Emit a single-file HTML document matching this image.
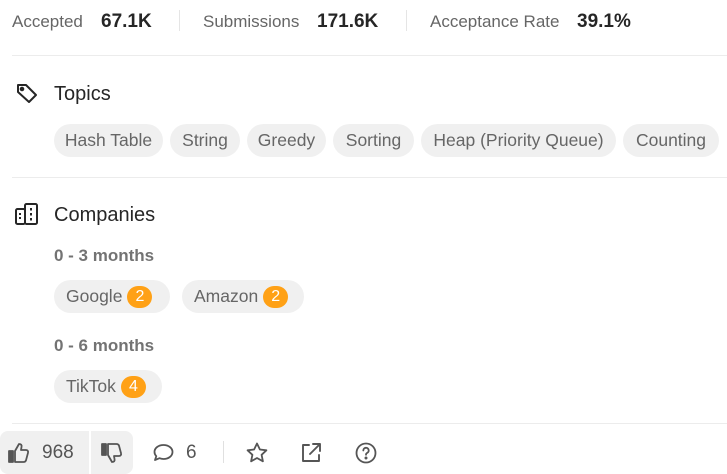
<!DOCTYPE html>
<html><head><meta charset="utf-8"><style>
*{margin:0;padding:0;box-sizing:border-box}
body{width:727px;height:474px;background:#fff;font-family:"Liberation Sans",sans-serif;position:relative;overflow:hidden;color:#262626}
.a{position:absolute;white-space:nowrap}
.lbl{font-size:17px;color:#666}
.val{font-size:19px;font-weight:bold;color:#262626}
.vd{position:absolute;width:1px;background:#e5e5e5}
.hl{position:absolute;left:12px;right:0;height:1px;background:#ececec}
.chip{position:absolute;height:33px;border-radius:17px;background:#f0f0f0;color:#666;font-size:17.5px;line-height:33px;text-align:center;white-space:nowrap}
.chip.l{text-align:left;padding-left:12px}
.badge{display:inline-block;background:#ffa116;color:#fff;border-radius:11px;width:25px;height:22px;line-height:22px;font-size:16px;text-align:center;vertical-align:1px;margin-left:5px}
.sub{font-size:17px;color:#737373;font-weight:bold}
svg{position:absolute}
</style></head><body>
<div class="a lbl" style="left:12px;top:12px">Accepted</div>
<div class="a val" style="left:101px;top:11px">67.1K</div>
<div class="vd" style="left:179px;top:10px;height:21px"></div>
<div class="a lbl" style="left:203px;top:12px">Submissions</div>
<div class="a val" style="left:317px;top:11px">171.6K</div>
<div class="vd" style="left:406px;top:10px;height:21px"></div>
<div class="a lbl" style="left:430px;top:12px">Acceptance Rate</div>
<div class="a val" style="left:577px;top:11px">39.1%</div>
<div class="hl" style="top:55px"></div>

<svg style="left:15px;top:82px" width="24" height="22" viewBox="0 0 24 22" fill="none" stroke="#262626" stroke-width="2" stroke-linejoin="round"><path d="M3 3h8l10 10-7 7L3 10z"/><circle cx="7" cy="7" r="1.3" fill="#262626"/></svg>
<div class="a" style="left:54px;top:83px;font-size:20px">Topics</div>
<div class="chip" style="left:54px;top:124px;width:109px">Hash Table</div>
<div class="chip" style="left:170px;top:124px;width:70px">String</div>
<div class="chip" style="left:247px;top:124px;width:79px">Greedy</div>
<div class="chip" style="left:333px;top:124px;width:81px">Sorting</div>
<div class="chip" style="left:421px;top:124px;width:195px">Heap (Priority Queue)</div>
<div class="chip" style="left:623px;top:124px;width:96px">Counting</div>
<div class="hl" style="top:177px"></div>

<svg style="left:15px;top:202px" width="24" height="24" viewBox="0 0 24 24" fill="none" stroke="#262626" stroke-width="2"><rect x="1" y="7" width="9" height="15" rx="1.5"/><rect x="10" y="2" width="12" height="20" rx="1.5"/><g fill="#262626" stroke="none"><rect x="4" y="11" width="2" height="2"/><rect x="4" y="15" width="2" height="2"/><rect x="15" y="6" width="2" height="2.5"/><rect x="15" y="11" width="2" height="2.5"/><rect x="15" y="16" width="2" height="2.5"/></g></svg>
<div class="a" style="left:54px;top:204px;font-size:20px">Companies</div>
<div class="a sub" style="left:54px;top:246px">0 - 3 months</div>
<div class="chip l" style="left:54px;top:280px;width:116px">Google<span class="badge">2</span></div>
<div class="chip l" style="left:182px;top:280px;width:122px">Amazon<span class="badge">2</span></div>
<div class="a sub" style="left:54px;top:336px">0 - 6 months</div>
<div class="chip l" style="left:54px;top:370px;width:108px">TikTok<span class="badge">4</span></div>
<div class="hl" style="top:423px"></div>

<div class="a" style="left:0;top:431px;width:89px;height:43px;background:#f0f0f0;border-radius:8px 0 0 8px"></div>
<div class="a" style="left:91px;top:431px;width:42px;height:43px;background:#f0f0f0;border-radius:0 8px 8px 0"></div>
<svg style="left:8px;top:442px" width="22" height="22" viewBox="0 0 22 22" fill="none" stroke="#555" stroke-width="1.8" stroke-linejoin="round"><rect x="1" y="9" width="4" height="11" fill="#555"/><path d="M7 9l4-7c2 0 3 1 2.5 3L13 8h5c1.5 0 2.5 1.3 2 2.8l-2 7.5c-.4 1.2-1.3 1.7-2.5 1.7H7z"/></svg>
<div class="a" style="left:42px;top:442px;font-size:19px;color:#555">968</div>
<svg style="left:101px;top:442px" width="22" height="22" viewBox="0 0 22 22" fill="none" stroke="#555" stroke-width="1.8" stroke-linejoin="round"><rect x="1" y="2" width="4" height="11" fill="#555"/><path d="M7 13l4 7c2 0 3-1 2.5-3L13 14h5c1.5 0 2.5-1.3 2-2.8l-2-7.5C17.6 2.5 16.7 2 15.5 2H7z"/></svg>
<svg style="left:152px;top:442px" width="23" height="22" viewBox="0 0 23 22" fill="none" stroke="#555" stroke-width="1.8" stroke-linejoin="round"><path d="M11.5 3c5 0 9 3 9 7s-4 7-9 7c-1.5 0-2.8-.3-4-.8L3 18l1.3-3.8C3.2 13 2.5 11.6 2.5 10c0-4 4-7 9-7z"/></svg>
<div class="a" style="left:186px;top:442px;font-size:19px;color:#555">6</div>
<div class="vd" style="left:223px;top:441px;height:22px;background:#e0e0e0"></div>
<svg style="left:245px;top:441px" width="24" height="24" viewBox="0 0 24 24" fill="none" stroke="#555" stroke-width="1.8" stroke-linejoin="round"><path d="M12 2.5l2.9 6 6.5.8-4.8 4.5 1.3 6.5L12 17l-5.9 3.3 1.3-6.5-4.8-4.5 6.5-.8z"/></svg>
<svg style="left:299px;top:441px" width="24" height="24" viewBox="0 0 24 24" fill="none" stroke="#555" stroke-width="1.9" stroke-linecap="round" stroke-linejoin="round"><path d="M10 4H4v16h16v-6"/><path d="M14 3h7v7M21 3l-10 10"/></svg>
<svg style="left:354px;top:441px" width="24" height="24" viewBox="0 0 24 24" fill="none" stroke="#555" stroke-width="1.8" stroke-linecap="round"><circle cx="12" cy="12" r="9.5"/><path d="M9.3 9.5a2.7 2.7 0 1 1 3.7 2.5c-.8.4-1 .9-1 1.8"/><circle cx="12" cy="17" r=".6" fill="#555"/></svg>
</body></html>
